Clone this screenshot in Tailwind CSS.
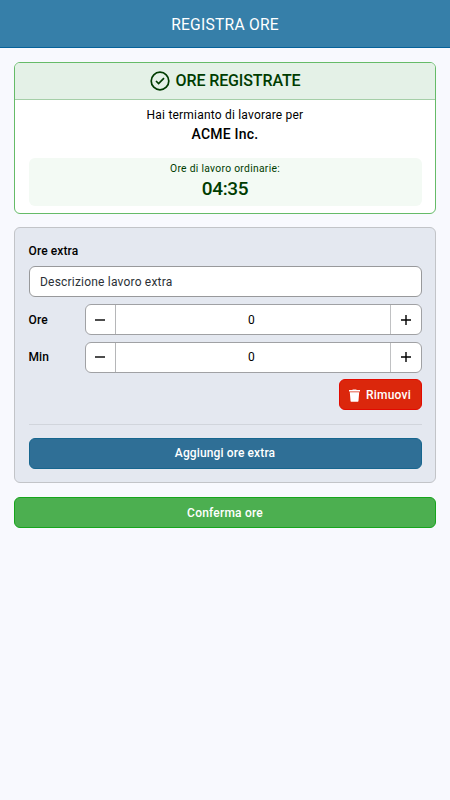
<!DOCTYPE html>
<html lang="it">
<head>
<meta charset="utf-8">
<meta name="viewport" content="width=device-width, initial-scale=1">
<title>Registra ore</title>
<script src="https://cdn.jsdelivr.net/npm/@tailwindcss/browser@4"></script>
</head>
<body class="min-h-screen bg-[#f8f9fe] font-[Roboto,sans-serif] text-[12px] leading-4 tracking-[0.2px] text-black">
<header class="flex h-12 items-center justify-center border-b border-[#06629a] bg-[#367fa9] pt-[3px] text-[15.6px] tracking-[0.25px] text-white">
  <h1>REGISTRA ORE</h1>
</header>
<main class="flex flex-col gap-[14px] px-[14px] pt-[14px]">
  <section class="h-[152px] overflow-hidden rounded-md border border-[#65bb68] bg-white">
    <h2 class="flex h-[37px] items-center justify-center gap-[6px] border-b border-[#a5cfa8] bg-[#e4f1e7] text-[16px] font-medium tracking-[-0.12px] text-[#003c00]">
      <svg class="size-5" viewBox="0 0 20 20" fill="none" stroke="currentColor" stroke-width="1.7"><circle cx="10" cy="10" r="8.8"/><path d="M6 10 8.6 12.5 14 7.1"/></svg>
      <span>ORE REGISTRATE</span>
    </h2>
    <div class="px-[13.5px] pt-[7px] text-center">
      <p>Hai termianto di lavorare per</p>
      <p class="mt-[2px] text-[14px] font-medium leading-[18px] tracking-[0.22px]">ACME Inc.</p>
      <div class="mt-[15px] h-12 rounded-md bg-[#f3faf4] pt-[4px] text-[#003c00]">
        <p class="text-[10.3px] leading-[14px] tracking-[0.3px]">Ore di lavoro ordinarie:</p>
        <p class="mt-px text-[19px] font-medium leading-6 tracking-[-0.3px]">04:35</p>
      </div>
    </div>
  </section>
  <section class="-mt-px flex h-[256px] flex-col rounded-md border border-[#c2c4c8] bg-[#e4e8f0] px-[13.5px] pt-[15px]">
    <h3 class="font-medium tracking-[0.12px]">Ore extra</h3>
    <div class="mt-[7px] flex h-[31px] shrink-0 items-center rounded-md border border-[#98999b] bg-white px-[10.5px] text-[#2b3036]">Descrizione lavoro extra</div>
    <div class="mt-[7px] flex items-center">
      <span class="w-14 font-medium tracking-[0.12px]">Ore</span>
      <div class="flex h-[31px] flex-1 items-stretch rounded-md border border-[#a0a1a4] bg-white">
        <button class="flex w-[30px] items-center justify-center border-r border-[#b5b6b8]" aria-label="Meno"><svg class="size-3" viewBox="0 0 12 12" stroke="currentColor" stroke-width="1.4"><path d="M1 6h10"/></svg></button>
        <span class="flex flex-1 items-center justify-center pr-[2px]">0</span>
        <button class="flex w-[31px] items-center justify-center border-l border-[#c0c1c3]" aria-label="Più"><svg class="size-3" viewBox="0 0 12 12" stroke="currentColor" stroke-width="1.4"><path d="M1 6h10M6 1v10"/></svg></button>
      </div>
    </div>
    <div class="mt-[6.6px] flex items-center">
      <span class="w-14 font-medium tracking-[0.12px]">Min</span>
      <div class="flex h-[31px] flex-1 items-stretch rounded-md border border-[#a0a1a4] bg-white">
        <button class="flex w-[30px] items-center justify-center border-r border-[#b5b6b8]" aria-label="Meno"><svg class="size-3" viewBox="0 0 12 12" stroke="currentColor" stroke-width="1.4"><path d="M1 6h10"/></svg></button>
        <span class="flex flex-1 items-center justify-center pr-[2px]">0</span>
        <button class="flex w-[31px] items-center justify-center border-l border-[#c0c1c3]" aria-label="Più"><svg class="size-3" viewBox="0 0 12 12" stroke="currentColor" stroke-width="1.4"><path d="M1 6h10M6 1v10"/></svg></button>
      </div>
    </div>
    <button class="mt-[6.7px] flex h-[31px] w-[83px] shrink-0 items-center justify-center gap-[6px] self-end rounded-md border border-[#e30a00] bg-[#db270c] pt-px font-medium text-white">
      <svg class="h-[13px] w-[11px]" viewBox="0 0 11 13" fill="currentColor"><path d="M0 1.1h3.3L3.8.5h3.4l.5.6H11v1.3H0zM.8 3.2h9.4l-.7 8.5c0 .6-.4 1-1 1h-6c-.6 0-1-.4-1-1z"/></svg>
      <span>Rimuovi</span>
    </button>
    <hr class="mt-[13.5px] border-t-[1.5px] border-[#d1d5dc]">
    <button class="mt-[13.2px] h-[31px] shrink-0 rounded-md border border-[#17668f] bg-[#2f6f96] font-medium tracking-[0.12px] text-white">Aggiungi ore extra</button>
  </section>
  <button class="h-[31px] rounded-md border border-[#16a51c] bg-[#4caf50] font-medium text-white">Conferma ore</button>
</main>
</body>
</html>
